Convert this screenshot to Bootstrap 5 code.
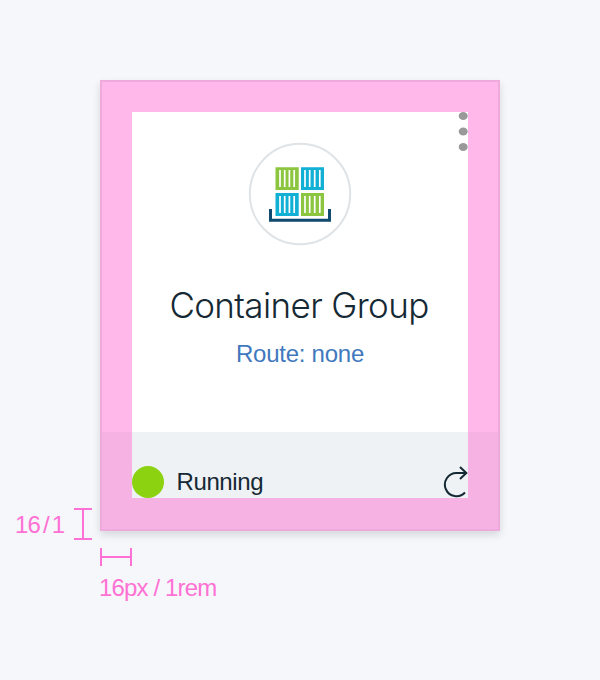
<!DOCTYPE html>
<html lang="en">
<head>
<meta charset="utf-8">
<meta name="viewport" content="width=device-width, initial-scale=1">
<title>Container Group card padding</title>
<link rel="stylesheet" href="https://cdn.jsdelivr.net/npm/bootstrap@5.3.0/dist/css/bootstrap.min.css">
<style>
body{background:#f5f7fb;color:#152934;font-family:"Liberation Sans",Arial,sans-serif;height:680px;overflow:hidden}
.spec{display:grid;grid-template-columns:100px 400px;grid-template-rows:451px auto;padding-top:80px}
.tile{grid-column:2;border:2px solid #dfe3e6;border-radius:0;background:#fff;box-shadow:0 4px 8px rgba(0,0,0,.13);color:#152934}
.pad-overlay{position:absolute;inset:-2px;border:32px solid rgba(255,113,212,.5);border-bottom-width:33px;pointer-events:none}
.tile-body{height:350px;padding:30px}
.menu-dots{height:0}
.menu-dots svg,.emblem{display:block}
.emblem{margin:30px auto 0}
.tile-title{font-family:Inter,"Liberation Sans",sans-serif;font-size:35px;line-height:44px;font-weight:300;margin:37px 0 0;padding-right:2px;letter-spacing:-.63px;white-space:nowrap}
.tile-route{font-size:24px;line-height:30px;margin-top:12px;color:#4178be;letter-spacing:-.25px;white-space:nowrap}
.tile-foot{height:97px;background:#eef2f5;padding:34px 30px 31px}
.status-dot{width:32px;height:32px;background:#8cd211;border-radius:50%}
.status-text{font-size:24px;line-height:32px;margin-left:12.5px;letter-spacing:-.4px}
.note{color:#ff71d4;font-size:24px;line-height:30px;white-space:nowrap;letter-spacing:-.85px}
.note-side{grid-column:1;grid-row:1;padding:0 8px 0 15px;margin-bottom:-9px}
.note-side span{word-spacing:-2.8px}
.note-side svg,.note-under svg{display:block;flex:none}
.note-under{grid-column:2;padding-top:16px}
.note-under div{margin:6px 0 0 -1px}
</style>
<script src="https://cdn.jsdelivr.net/npm/bootstrap@5.3.0/dist/js/bootstrap.bundle.min.js"></script>
</head>
<body>
<main class="spec">
  <div class="note note-side d-flex align-items-end justify-content-between">
    <span>16 / 1</span>
    <svg width="18" height="34" fill="none" stroke="#ff71d4" stroke-width="2"><path d="M0 3H18M0 33H18M9 3V33"/></svg>
  </div>
  <section class="card tile">
    <div class="tile-body text-center">
      <div class="menu-dots d-flex justify-content-end">
        <svg width="10" height="40" fill="#999"><ellipse cx="5.200" cy="4" rx="4.500" ry="4"/><ellipse cx="5.200" cy="19.500" rx="4.500" ry="4"/><ellipse cx="5.200" cy="35" rx="4.500" ry="4"/></svg>
      </div>
      <svg class="emblem" width="104" height="104" viewBox="248 142 104 104">
        <circle cx="300" cy="194" r="50.2" fill="none" stroke="#dfe3e6" stroke-width="2"/>
        <path fill="#8cc540" d="M275.500 167.300h23.200v22.700h-23.200zM301 192.900h23v23H301z"/>
        <path fill="#12b0d4" d="M301 167.300h23v22.700H301zM275.500 192.900h23.200v23h-23.200z"/>
        <path stroke="#fff" stroke-width="1.700" d="M280 170v17M284.700 170v17M289.400 170v17M294.200 170v17M305 170v17M309.700 170v17M314.700 170v17M319.800 170v17M280 196v17M284.700 196v17M289.400 196v17M294.200 196v17M305 196v17M309.700 196v17M314.700 196v17M319.800 196v17"/>
        <path fill="none" stroke="#104a70" stroke-width="3" d="M270.500 209v11.200h59V209"/>
      </svg>
      <h1 class="tile-title">Container Group</h1>
      <p class="tile-route mb-0">Route: none</p>
    </div>
    <div class="tile-foot d-flex">
      <span class="status-dot"></span>
      <span class="status-text">Running</span>
      <svg class="ms-auto" width="26" height="32" viewBox="442 466 26 32" fill="none" stroke="#152934" stroke-width="2"><path d="M466 473H456.500A11.600 11.600 0 1 0 465 492.500M460 467L466.300 473L460 479"/></svg>
    </div>
    <div class="pad-overlay"></div>
  </section>
  <div class="note note-under">
    <svg width="32" height="20" fill="none" stroke="#ff71d4" stroke-width="2"><path d="M1 1V19M31 1V19M1 10H31"/></svg>
    <div>16px / 1rem</div>
  </div>
</main>
</body>
</html>
